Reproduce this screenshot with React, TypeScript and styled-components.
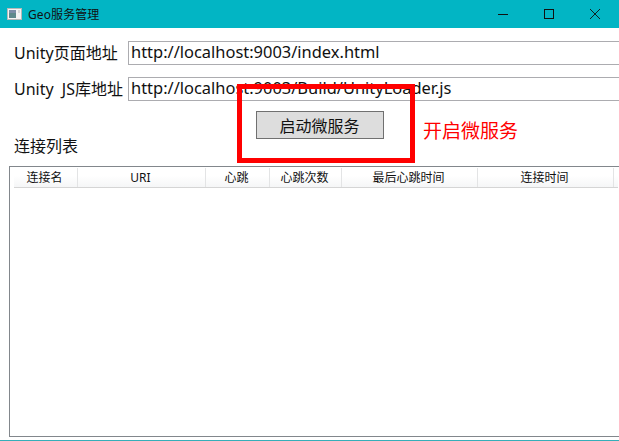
import React from "react";
import styled, { createGlobalStyle } from "styled-components";

const GlobalStyle = createGlobalStyle`
  html, body {
    margin: 0;
    padding: 0;
    background: #fff;
    overflow: hidden;
  }
  body {
    font-family: "Noto Sans", "Noto Sans CJK SC", sans-serif;
    color: #111;
  }
`;

const columns = [
  { title: "连接名", width: 64 },
  { title: "URI", width: 128 },
  { title: "心跳", width: 64 },
  { title: "心跳次数", width: 72 },
  { title: "最后心跳时间", width: 136 },
  { title: "连接时间", width: 136 },
];

const App: React.FC = () => {
  return (
    <Window>
      <GlobalStyle />
      <TitleBar>
        <AppIcon viewBox="0 0 15 12">
          <rect x="0.5" y="0.5" width="14" height="11" fill="#f4f4f4" stroke="#b8b8b8" />
          <rect x="2" y="2" width="7" height="8" fill="#5f8a8c" />
          <rect x="2" y="2" width="7" height="3" fill="#7c8ea8" />
          <rect x="11" y="2" width="2" height="3" fill="#d8d8d8" />
        </AppIcon>
        <WindowTitle>Geo服务管理</WindowTitle>
        <WindowButtons>
          <WindowButton>
            <svg width="12" height="12" viewBox="0 0 12 12">
              <path d="M1 6.5H11" stroke="#111" strokeWidth="1" />
            </svg>
          </WindowButton>
          <WindowButton>
            <svg width="12" height="12" viewBox="0 0 12 12">
              <rect x="1.5" y="1.5" width="9" height="9" fill="none" stroke="#111" />
            </svg>
          </WindowButton>
          <WindowButton>
            <svg width="12" height="12" viewBox="0 0 12 12">
              <path d="M1 1L11 11M11 1L1 11" stroke="#111" strokeWidth="0.9" />
            </svg>
          </WindowButton>
        </WindowButtons>
      </TitleBar>
      <Content>
        <FieldRow>
          <FieldLabel>Unity页面地址</FieldLabel>
          <FieldValue>http://localhost:9003/index.html</FieldValue>
        </FieldRow>
        <FieldRow $second>
          <FieldLabel $wide>Unity JS库地址</FieldLabel>
          <FieldValue>http://localhost:9003/Build/UnityLoader.js</FieldValue>
        </FieldRow>
        <ActionRow>
          <StartButton>启动微服务</StartButton>
        </ActionRow>
        <ListLabel>连接列表</ListLabel>
        <Grid>
          <GridHeader>
            {columns.map((col) => (
              <HeaderCell key={col.title} $width={col.width}>
                {col.title}
              </HeaderCell>
            ))}
          </GridHeader>
        </Grid>
      </Content>
      <BottomEdge />
      <Highlight />
      <Annotation>开启微服务</Annotation>
    </Window>
  );
};

export default App;

const Window = styled.div`
  position: relative;
  width: 619px;
  height: 441px;
  display: flex;
  flex-direction: column;
  overflow: hidden;
  background: #fff;
`;

const TitleBar = styled.div`
  height: 28px;
  flex: none;
  display: flex;
  align-items: center;
  padding-left: 7px;
  background: #02b5c4;
`;

const AppIcon = styled.svg`
  width: 15px;
  height: 12px;
  margin-right: 6px;
`;

const WindowTitle = styled.div`
  font-size: 12px;
  letter-spacing: 0.1px;
  color: #111;
`;

const WindowButtons = styled.div`
  margin-left: auto;
  margin-right: 1px;
  display: flex;
`;

const WindowButton = styled.div`
  width: 46px;
  height: 28px;
  display: flex;
  align-items: center;
  justify-content: center;
`;

const Content = styled.div`
  flex: 1;
  display: flex;
  flex-direction: column;
  padding: 13px 0 0 9px;
  min-height: 0;
`;

const FieldRow = styled.div<{ $second?: boolean }>`
  display: flex;
  align-items: center;
  height: 24px;
  margin-top: ${(p) => (p.$second ? "12px" : "0")};
  padding-left: 5px;
`;

const FieldLabel = styled.div<{ $wide?: boolean }>`
  width: 114px;
  flex: none;
  font-size: 16px;
  line-height: 24px;
  white-space: nowrap;
  word-spacing: ${(p) => (p.$wide ? "4px" : "0")};
`;

const FieldValue = styled.div`
  flex: 1;
  height: 24px;
  box-sizing: border-box;
  border: 1px solid #acacb0;
  border-right: none;
  padding-left: 2px;
  font-size: 16.45px;
  line-height: 20px;
  white-space: nowrap;
`;

const ActionRow = styled.div`
  display: flex;
  margin-top: 10px;
  padding-left: 247px;
`;

const StartButton = styled.div`
  width: 128px;
  height: 28px;
  box-sizing: border-box;
  display: flex;
  align-items: center;
  justify-content: center;
  border: 1px solid #707070;
  background: #dddddd;
  font-size: 16px;
  padding-right: 1px;
`;

const ListLabel = styled.div`
  margin: -3px 0 0 5px;
  font-size: 16px;
  line-height: 20px;
  height: 30px;
`;

const Grid = styled.div`
  width: 640px;
  height: 271px;
  flex: none;
  box-sizing: border-box;
  border: 1px solid #82878c;
  padding: 1px 0 0 4px;
`;

const GridHeader = styled.div`
  display: flex;
  height: 20px;
  width: 604px;
  box-sizing: border-box;
  border-bottom: 1px solid #d5d5d5;
  background: linear-gradient(#ffffff 40%, #f5f6f7);
`;

const HeaderCell = styled.div<{ $width: number }>`
  width: ${(p) => p.$width}px;
  flex: none;
  box-sizing: border-box;
  border-right: 1px solid #e3e4e5;
  padding-right: 2px;
  text-align: center;
  font-size: 12px;
  line-height: 19px;
`;

const BottomEdge = styled.div`
  height: 1px;
  flex: none;
  background: #35aeb9;
`;

const Highlight = styled.div`
  position: absolute;
  left: 237px;
  top: 84px;
  width: 178px;
  height: 79px;
  box-sizing: border-box;
  border: 5px solid #ff0000;
`;

const Annotation = styled.div`
  position: absolute;
  left: 423px;
  top: 118px;
  font-size: 19px;
  line-height: 26px;
  color: #ff0000;
`;
